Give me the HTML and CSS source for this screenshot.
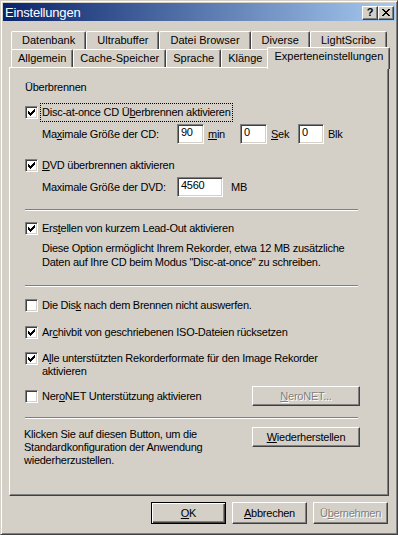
FILE: index.html
```html
<!DOCTYPE html>
<html lang="de">
<head>
    <meta charset="UTF-8">
    <title>Einstellungen</title>
    <link rel="stylesheet" href="styles.css">
</head>
<body>
<div class="window">
    <div class="titlebar">
        <span class="title">Einstellungen</span>
        <div class="caption-buttons">
            <span class="cap-btn help">?</span>
            <span class="cap-btn">
                <svg width="8" height="7" viewBox="0 0 8 7" shape-rendering="crispEdges">
                    <path d="M0 0h2v1h-2z M6 0h2v1h-2z M1 1h2v1h-2z M5 1h2v1h-2z M2 2h4v1h-4z M3 3h2v1h-2z M2 4h4v1h-4z M1 5h2v1h-2z M5 5h2v1h-2z M0 6h2v1h-2z M6 6h2v1h-2z" fill="#000"/>
                </svg>
            </span>
        </div>
    </div>

    <div class="dialog">
        <div class="tabs">
            <div class="tabrow">
                <span class="tab">Datenbank</span>
                <span class="tab">Ultrabuffer</span>
                <span class="tab">Datei Browser</span>
                <span class="tab">Diverse</span>
                <span class="tab">LightScribe</span>
            </div>
            <div class="tabrow">
                <span class="tab">Allgemein</span>
                <span class="tab">Cache-Speicher</span>
                <span class="tab">Sprache</span>
                <span class="tab">Klänge</span>
                <span class="tab active">Experteneinstellungen</span>
            </div>
        </div>

        <div class="panel">
            <div class="group-label">Überbrennen</div>

            <div class="check first">
                <span class="box on"><svg width="7" height="7" viewBox="0 0 7 7" shape-rendering="crispEdges"><path d="M0 2h1v3h-1z M1 3h1v3h-1z M2 4h1v3h-1z M3 3h1v3h-1z M4 2h1v3h-1z M5 1h1v3h-1z M6 0h1v3h-1z" fill="#000"/></svg></span>
                <span class="label focus">Disc-at-once CD Ü<u>b</u>erbrennen aktivieren</span>
            </div>
            <div class="size-row cd">
                <span>Ma<u>x</u>imale Größe der CD:</span>
                <span class="edit">90</span>
                <span class="unit"><u>m</u>in</span>
                <span class="edit">0</span>
                <span class="unit"><u>S</u>ek</span>
                <span class="edit">0</span>
                <span class="unit">Blk</span>
            </div>

            <div class="check dvd">
                <span class="box on"><svg width="7" height="7" viewBox="0 0 7 7" shape-rendering="crispEdges"><path d="M0 2h1v3h-1z M1 3h1v3h-1z M2 4h1v3h-1z M3 3h1v3h-1z M4 2h1v3h-1z M5 1h1v3h-1z M6 0h1v3h-1z" fill="#000"/></svg></span>
                <span class="label"><u>D</u>VD überbrennen aktivieren</span>
            </div>
            <div class="size-row dvd-size">
                <span>Maximale Größe der DVD:</span>
                <span class="edit">4560</span>
                <span class="unit mb">MB</span>
            </div>

            <div class="separator first-sep"></div>

            <div class="check leadout">
                <span class="box on"><svg width="7" height="7" viewBox="0 0 7 7" shape-rendering="crispEdges"><path d="M0 2h1v3h-1z M1 3h1v3h-1z M2 4h1v3h-1z M3 3h1v3h-1z M4 2h1v3h-1z M5 1h1v3h-1z M6 0h1v3h-1z" fill="#000"/></svg></span>
                <span class="label">Ers<u>t</u>ellen von kurzem Lead-Out aktivieren</span>
            </div>
            <p class="hint">Diese Option ermöglicht Ihrem Rekorder, etwa 12 MB zusätzliche<br>Daten auf Ihre CD beim Modus "Disc-at-once" zu schreiben.</p>

            <div class="separator second-sep"></div>

            <div class="check spaced">
                <span class="box"></span>
                <span class="label">Die Dis<u>k</u> nach dem Brennen nicht auswerfen.</span>
            </div>
            <div class="check spaced">
                <span class="box on"><svg width="7" height="7" viewBox="0 0 7 7" shape-rendering="crispEdges"><path d="M0 2h1v3h-1z M1 3h1v3h-1z M2 4h1v3h-1z M3 3h1v3h-1z M4 2h1v3h-1z M5 1h1v3h-1z M6 0h1v3h-1z" fill="#000"/></svg></span>
                <span class="label">Ar<u>c</u>hivbit von geschriebenen ISO-Dateien rücksetzen</span>
            </div>
            <div class="check formats">
                <span class="box on"><svg width="7" height="7" viewBox="0 0 7 7" shape-rendering="crispEdges"><path d="M0 2h1v3h-1z M1 3h1v3h-1z M2 4h1v3h-1z M3 3h1v3h-1z M4 2h1v3h-1z M5 1h1v3h-1z M6 0h1v3h-1z" fill="#000"/></svg></span>
                <span class="label">A<u>l</u>le unterstützten Rekorderformate für den Image Rekorder<br>aktivieren</span>
            </div>

            <div class="nero-row">
                <div class="check">
                    <span class="box"></span>
                    <span class="label">Ner<u>o</u>NET Unterstützung aktivieren</span>
                </div>
                <span class="btn wide disabled"><u>N</u>eroNET...</span>
            </div>

            <div class="separator third-sep"></div>

            <div class="reset-row">
                <p class="reset-text">Klicken Sie auf diesen Button, um die<br>Standardkonfiguration der Anwendung<br>wiederherzustellen.</p>
                <span class="btn wide"><u>W</u>iederherstellen</span>
            </div>
        </div>

        <div class="dialog-buttons">
            <span class="btn default"><u>O</u>K</span>
            <span class="btn"><u>A</u>bbrechen</span>
            <span class="btn disabled">Ü<u>b</u>ernehmen</span>
        </div>
    </div>
</div>
</body>
</html>
```

FILE: styles.css
```css
body {
    margin: 0;
    background-color: #d4d0c8;
    font-family: "Liberation Sans", Arial, sans-serif;
    font-size: 11px;
    letter-spacing: -0.25px;
    color: #000000;
}
p {
    margin: 0;
}
u {
    text-underline-offset: 1px;
}

.window {
    width: 398px;
    height: 535px;
    box-sizing: border-box;
    padding: 2px;
    border: 1px solid;
    border-color: #d4d0c8 #404040 #404040 #d4d0c8;
    box-shadow: inset 1px 1px #ffffff, inset -1px -1px #808080;
}

.titlebar {
    height: 18px;
    display: flex;
    align-items: center;
    justify-content: space-between;
    background: linear-gradient(to right, #0a246a, #a6caf0);
}
.title {
    padding-left: 2px;
    color: #ffffff;
    font-size: 13px;
    letter-spacing: -0.2px;
}
.caption-buttons {
    display: flex;
    padding-top: 1px;
    margin-right: 1px;
}
.cap-btn {
    width: 16px;
    height: 14px;
    box-sizing: border-box;
    display: flex;
    align-items: center;
    justify-content: center;
    background-color: #d4d0c8;
    border: 1px solid;
    border-color: #ffffff #404040 #404040 #ffffff;
    box-shadow: inset -1px -1px #808080;
}
.cap-btn.help {
    font-weight: bold;
    font-size: 11px;
    line-height: 11px;
    letter-spacing: 0;
}

.dialog {
    padding: 10px 6px 0 6px;
}

/* tabs */
.tabs {
    padding: 0 2px 0 2px;
}
.tabrow {
    height: 18px;
    display: flex;
    align-items: flex-start;
}
.tab {
    flex: 1 1 auto;
    height: 18px;
    box-sizing: border-box;
    padding: 0 6px;
    line-height: 17px;
    letter-spacing: 0;
    text-align: center;
    white-space: nowrap;
    background-color: #d4d0c8;
    border-top: 1px solid #ffffff;
    border-left: 1px solid #ffffff;
    border-right: 1px solid #404040;
    border-radius: 2px 2px 0 0;
    box-shadow: inset -1px 0 #808080;
}
.tab.active {
    position: relative;
    z-index: 1;
    height: 22px;
    margin: -2px -2px 0 -2px;
}

/* tab page */
.panel {
    height: 429px;
    box-sizing: border-box;
    padding: 13px 28px 0 15px;
    border: 1px solid;
    border-color: #ffffff #404040 #404040 #ffffff;
    box-shadow: inset -1px -1px #808080;
}
.group-label {
    line-height: 13px;
}

.check {
    display: flex;
    align-items: flex-start;
    line-height: 13px;
}
.check.first { margin-top: 10px; }
.check.dvd { margin-top: 13px; }
.check.leadout { margin-top: 9px; }
.check.spaced { margin-top: 10px; }
.check.formats { margin-top: 9px; }

.box {
    width: 13px;
    height: 13px;
    box-sizing: border-box;
    margin-top: 2px;
    flex-shrink: 0;
    display: flex;
    align-items: center;
    justify-content: center;
    background-color: #ffffff;
    border: 1px solid;
    border-color: #808080 #ffffff #ffffff #808080;
    box-shadow: inset 1px 1px #404040, inset -1px -1px #d4d0c8;
}
.label {
    margin-left: 3px;
    padding: 2px 1px;
}
.label.focus {
    outline: 1px dotted #000000;
    outline-offset: 0;
}

.size-row {
    display: grid;
    align-items: center;
    height: 20px;
    margin-top: 3px;
    padding-left: 17px;
}
.size-row.cd {
    grid-template-columns: 135px 27px 36px 27px 31px 26px auto;
}
.size-row.dvd-size {
    grid-template-columns: 135px 46px auto;
}
.edit {
    height: 20px;
    box-sizing: border-box;
    padding: 1px 0 0 3px;
    line-height: 13px;
    background-color: #ffffff;
    border: 1px solid;
    border-color: #808080 #ffffff #ffffff #808080;
    box-shadow: inset 1px 1px #404040, inset -1px -1px #d4d0c8;
}
.unit {
    padding-left: 4px;
}
.unit.mb {
    padding-left: 8px;
}

.separator {
    height: 2px;
    box-sizing: border-box;
    margin-right: 2px;
    border-top: 1px solid #808080;
    border-bottom: 1px solid #ffffff;
}
.separator.first-sep { margin-top: 12px; }
.separator.second-sep { margin-top: 16px; }
.separator.third-sep { margin-top: 11px; }

.hint {
    margin-top: 4px;
    padding-left: 17px;
    line-height: 14px;
}

.nero-row {
    display: flex;
    align-items: center;
    justify-content: space-between;
    height: 20px;
    margin-top: 6px;
}
.nero-row .box {
    margin-top: 2px;
}

.reset-row {
    display: flex;
    justify-content: space-between;
    align-items: flex-start;
    margin-top: 8px;
}
.reset-text {
    padding-top: 1px;
    margin-left: -1px;
    line-height: 13px;
}

/* push buttons */
.btn {
    width: 75px;
    height: 22px;
    box-sizing: border-box;
    display: flex;
    align-items: center;
    justify-content: center;
    background-color: #d4d0c8;
    border: 1px solid;
    border-color: #ffffff #404040 #404040 #ffffff;
    box-shadow: inset -1px -1px #808080;
}
.btn.wide {
    width: 108px;
    height: 20px;
}
.btn.default {
    border-color: #000000;
    box-shadow: inset 1px 1px #ffffff, inset -1px -1px #404040, inset -2px -2px #808080;
}
.btn.disabled {
    color: #808080;
    text-shadow: 1px 1px #ffffff;
}

.dialog-buttons {
    display: flex;
    justify-content: flex-end;
    gap: 6px;
    margin-top: 6px;
    padding-right: 1px;
}
```
